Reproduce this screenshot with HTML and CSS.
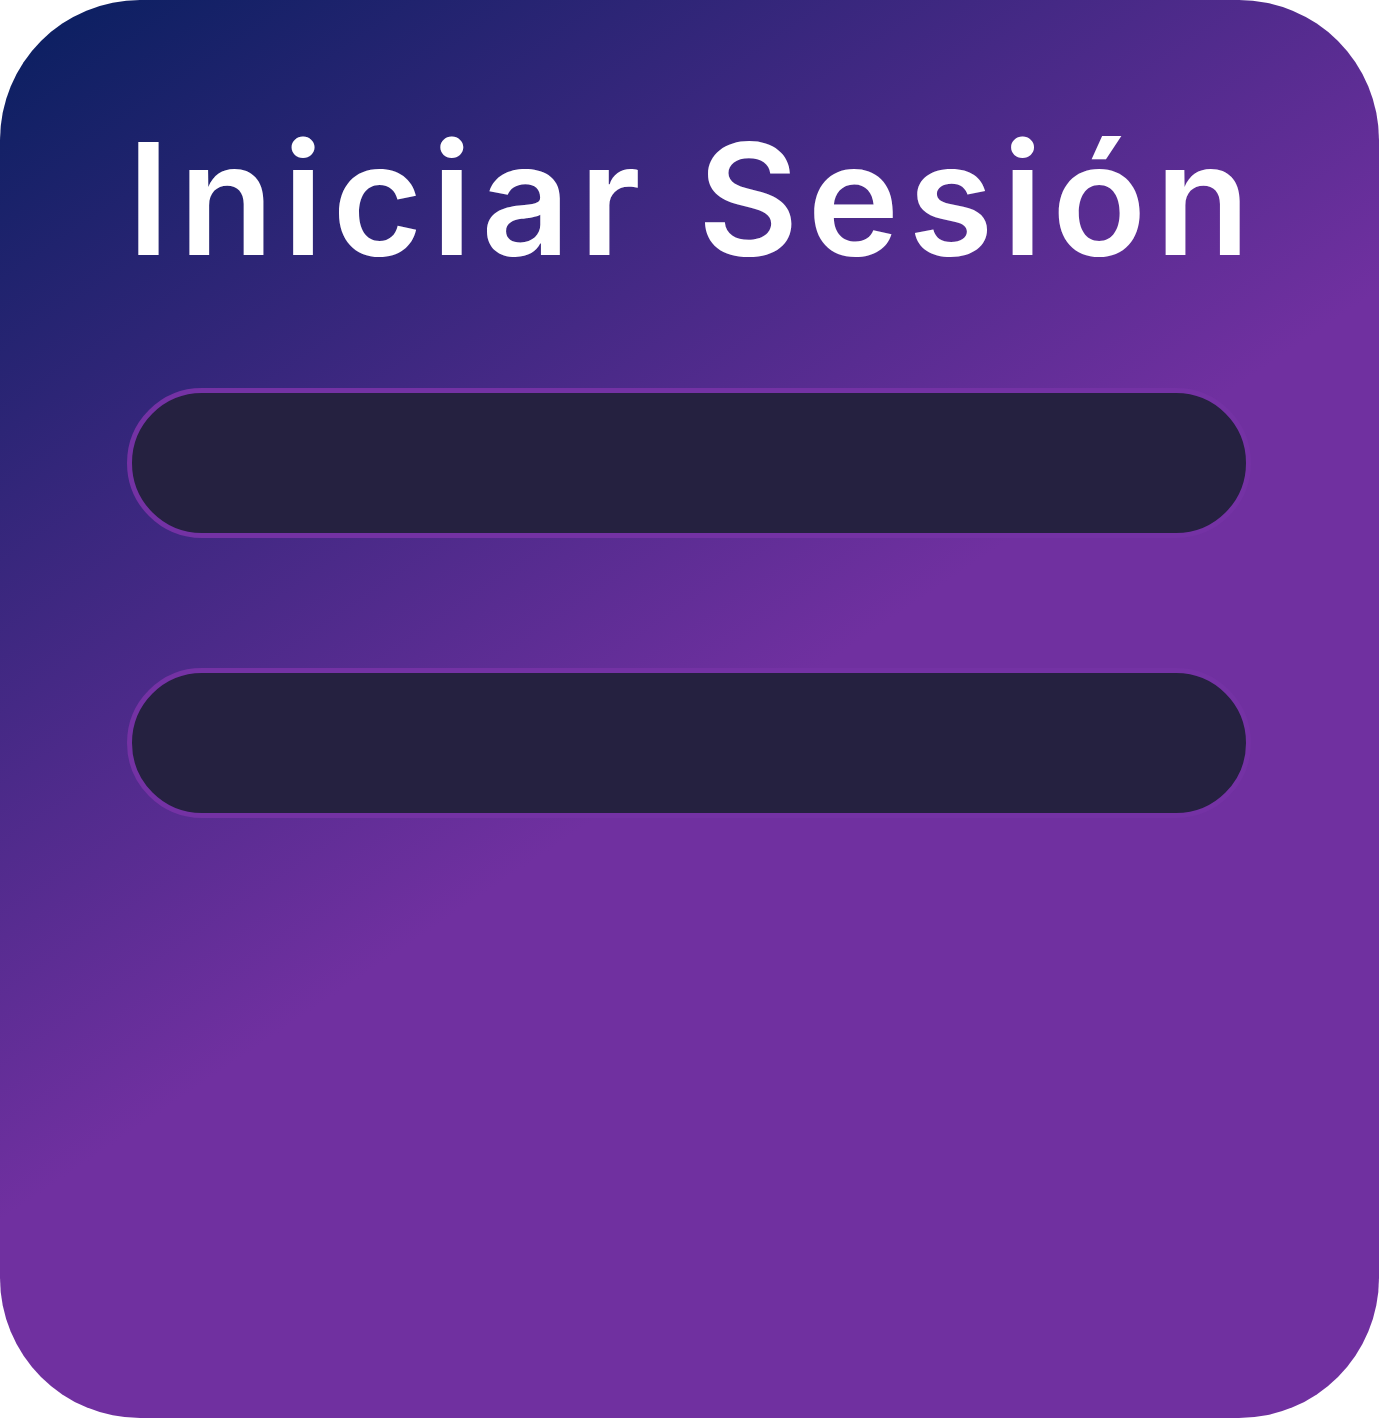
FILE: index.html
```html
<!DOCTYPE html>
<html lang="es">
<head>
<meta charset="utf-8">
<title>Iniciar Sesión</title>
<link rel="stylesheet" href="styles.css">
</head>
<body>
<main class="card">
  <h1 class="title">Iniciar Sesión</h1>
  <form class="form">
    <input class="field" type="text" aria-label="Usuario">
    <input class="field" type="password" aria-label="Contraseña">
  </form>
</main>
</body>
</html>
```

FILE: styles.css
```css
html, body {
  margin: 0;
  padding: 0;
  background: #ffffff;
}

.card {
  box-sizing: border-box;
  width: 1379px;
  height: 1418px;
  border-radius: 140px;
  background: linear-gradient(146deg, #081f5f 0%, #7030a0 52%, #7030a0 100%);
  padding: 0 128px 0 127px;
  display: flex;
  flex-direction: column;
}

.title {
  margin: 0;
  padding-top: 119px;
  padding-right: 8px;
  height: 278px;
  box-sizing: border-box;
  font-family: "Inter", "Liberation Sans", sans-serif;
  font-weight: 600;
  font-size: 155px;
  line-height: 160px;
  letter-spacing: 9px;
  color: #ffffff;
  text-align: center;
  white-space: nowrap;
}

.form {
  margin-top: 110px;
  display: flex;
  flex-direction: column;
  gap: 130px;
}

.field {
  box-sizing: border-box;
  width: 100%;
  height: 150px;
  margin: 0;
  border: 5px solid #7432a4;
  border-radius: 75px;
  background: #252140;
  outline: none;
  font: inherit;
}
```
